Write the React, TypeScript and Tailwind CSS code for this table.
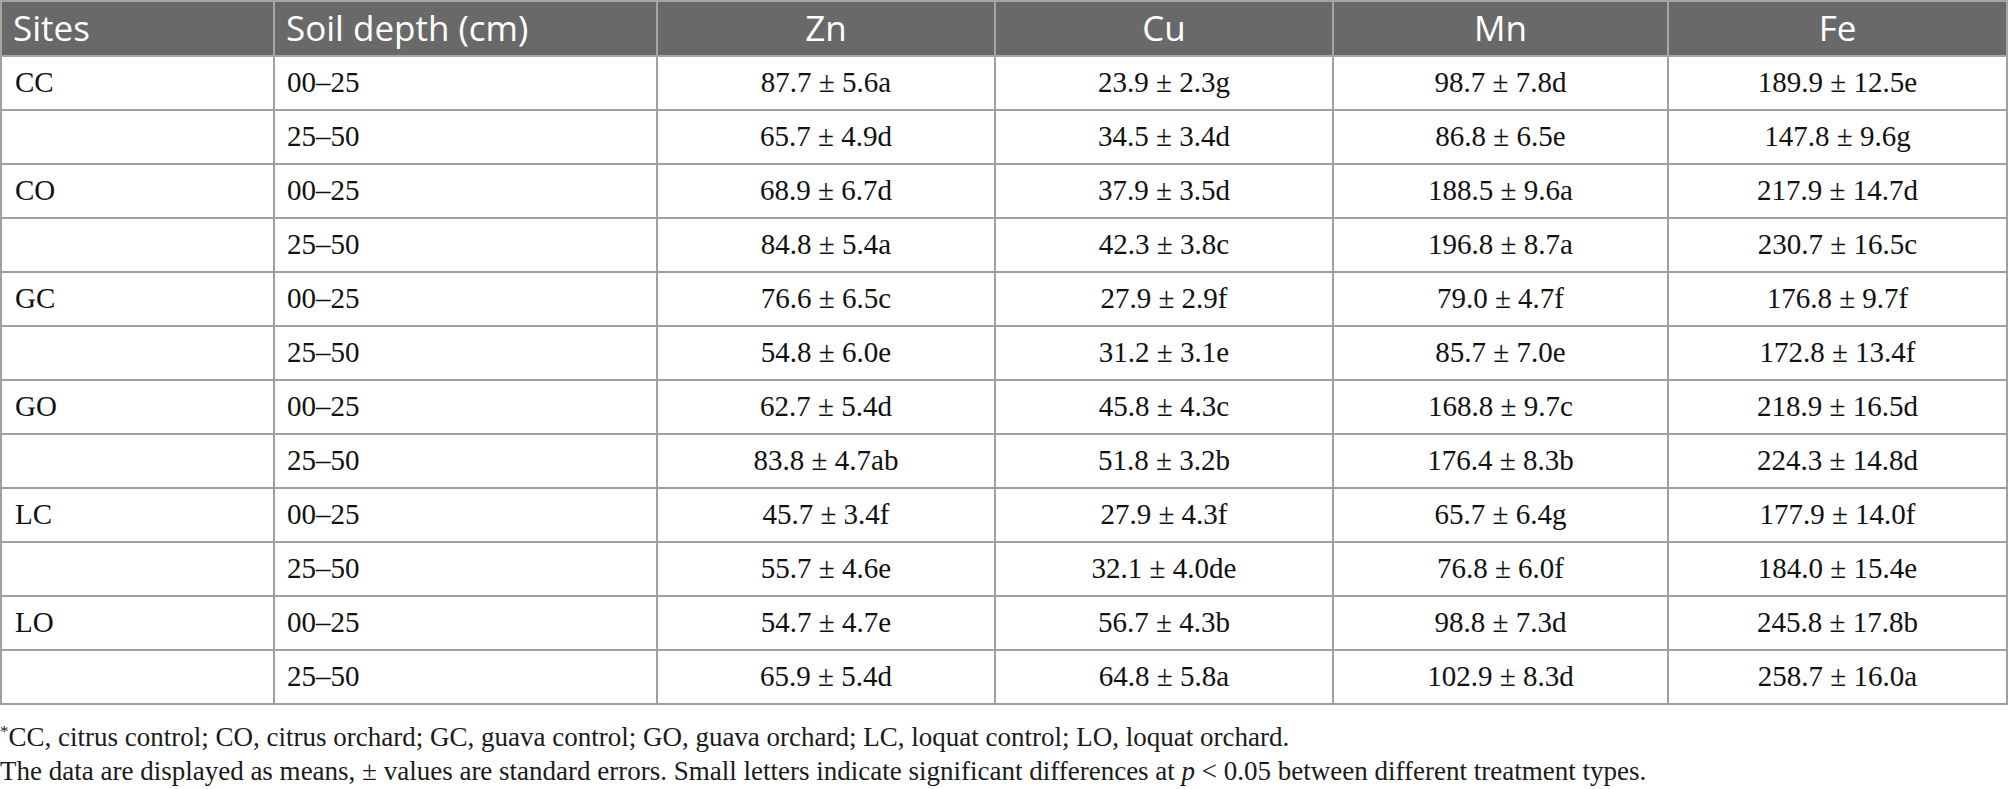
import React from 'react';

type Row = {
  site: string;
  depth: string;
  zn: string;
  cu: string;
  mn: string;
  fe: string;
};

const rows: Row[] = [
  { site: 'CC', depth: '00–25', zn: '87.7 ± 5.6a', cu: '23.9 ± 2.3g', mn: '98.7 ± 7.8d', fe: '189.9 ± 12.5e' },
  { site: '', depth: '25–50', zn: '65.7 ± 4.9d', cu: '34.5 ± 3.4d', mn: '86.8 ± 6.5e', fe: '147.8 ± 9.6g' },
  { site: 'CO', depth: '00–25', zn: '68.9 ± 6.7d', cu: '37.9 ± 3.5d', mn: '188.5 ± 9.6a', fe: '217.9 ± 14.7d' },
  { site: '', depth: '25–50', zn: '84.8 ± 5.4a', cu: '42.3 ± 3.8c', mn: '196.8 ± 8.7a', fe: '230.7 ± 16.5c' },
  { site: 'GC', depth: '00–25', zn: '76.6 ± 6.5c', cu: '27.9 ± 2.9f', mn: '79.0 ± 4.7f', fe: '176.8 ± 9.7f' },
  { site: '', depth: '25–50', zn: '54.8 ± 6.0e', cu: '31.2 ± 3.1e', mn: '85.7 ± 7.0e', fe: '172.8 ± 13.4f' },
  { site: 'GO', depth: '00–25', zn: '62.7 ± 5.4d', cu: '45.8 ± 4.3c', mn: '168.8 ± 9.7c', fe: '218.9 ± 16.5d' },
  { site: '', depth: '25–50', zn: '83.8 ± 4.7ab', cu: '51.8 ± 3.2b', mn: '176.4 ± 8.3b', fe: '224.3 ± 14.8d' },
  { site: 'LC', depth: '00–25', zn: '45.7 ± 3.4f', cu: '27.9 ± 4.3f', mn: '65.7 ± 6.4g', fe: '177.9 ± 14.0f' },
  { site: '', depth: '25–50', zn: '55.7 ± 4.6e', cu: '32.1 ± 4.0de', mn: '76.8 ± 6.0f', fe: '184.0 ± 15.4e' },
  { site: 'LO', depth: '00–25', zn: '54.7 ± 4.7e', cu: '56.7 ± 4.3b', mn: '98.8 ± 7.3d', fe: '245.8 ± 17.8b' },
  { site: '', depth: '25–50', zn: '65.9 ± 5.4d', cu: '64.8 ± 5.8a', mn: '102.9 ± 8.3d', fe: '258.7 ± 16.0a' },
];

const th = 'border-2 border-[#a6a6a6] font-normal';
const td = 'border-2 border-[#a0a0a0] h-[54px] p-0 align-middle';

export default function App() {
  return (
    <div className="w-[2008px] bg-white text-[#111] font-['Liberation_Serif',serif]">
      <table className="w-[2006px] table-fixed border-collapse">
        <colgroup>
          <col className="w-[273px]" />
          <col className="w-[383px]" />
          <col className="w-[338px]" />
          <col className="w-[338px]" />
          <col className="w-[335px]" />
          <col className="w-[339px]" />
        </colgroup>
        <thead>
          <tr className="h-[54px] bg-[#696969] text-white text-[35px] font-['Open_Sans',sans-serif]">
            <th className={`${th} text-left pl-[11px]`}>Sites</th>
            <th className={`${th} text-left pl-[11px]`}>Soil depth (cm)</th>
            <th className={th}>Zn</th>
            <th className={th}>Cu</th>
            <th className={th}>Mn</th>
            <th className={th}>Fe</th>
          </tr>
        </thead>
        <tbody className="text-[29px]">
          {rows.map((r, i) => (
            <tr key={i}>
              <td className={`${td} pl-[13px]`}>{r.site}</td>
              <td className={`${td} pl-[12px]`}>{r.depth}</td>
              <td className={`${td} text-center`}>{r.zn}</td>
              <td className={`${td} text-center`}>{r.cu}</td>
              <td className={`${td} text-center`}>{r.mn}</td>
              <td className={`${td} text-center`}>{r.fe}</td>
            </tr>
          ))}
        </tbody>
      </table>
      <div className="mt-[15px] text-[27px] leading-[34px] text-[#1a1a1a]">
        <p>
          <sup className="text-[17px]">*</sup>CC, citrus control; CO, citrus orchard; GC, guava control; GO, guava orchard; LC,
          loquat control; LO, loquat orchard.
        </p>
        <p>
          The data are displayed as means, ± values are standard errors. Small letters indicate significant differences at{' '}
          <i>p</i> &lt; 0.05 between different treatment types.
        </p>
      </div>
    </div>
  );
}
